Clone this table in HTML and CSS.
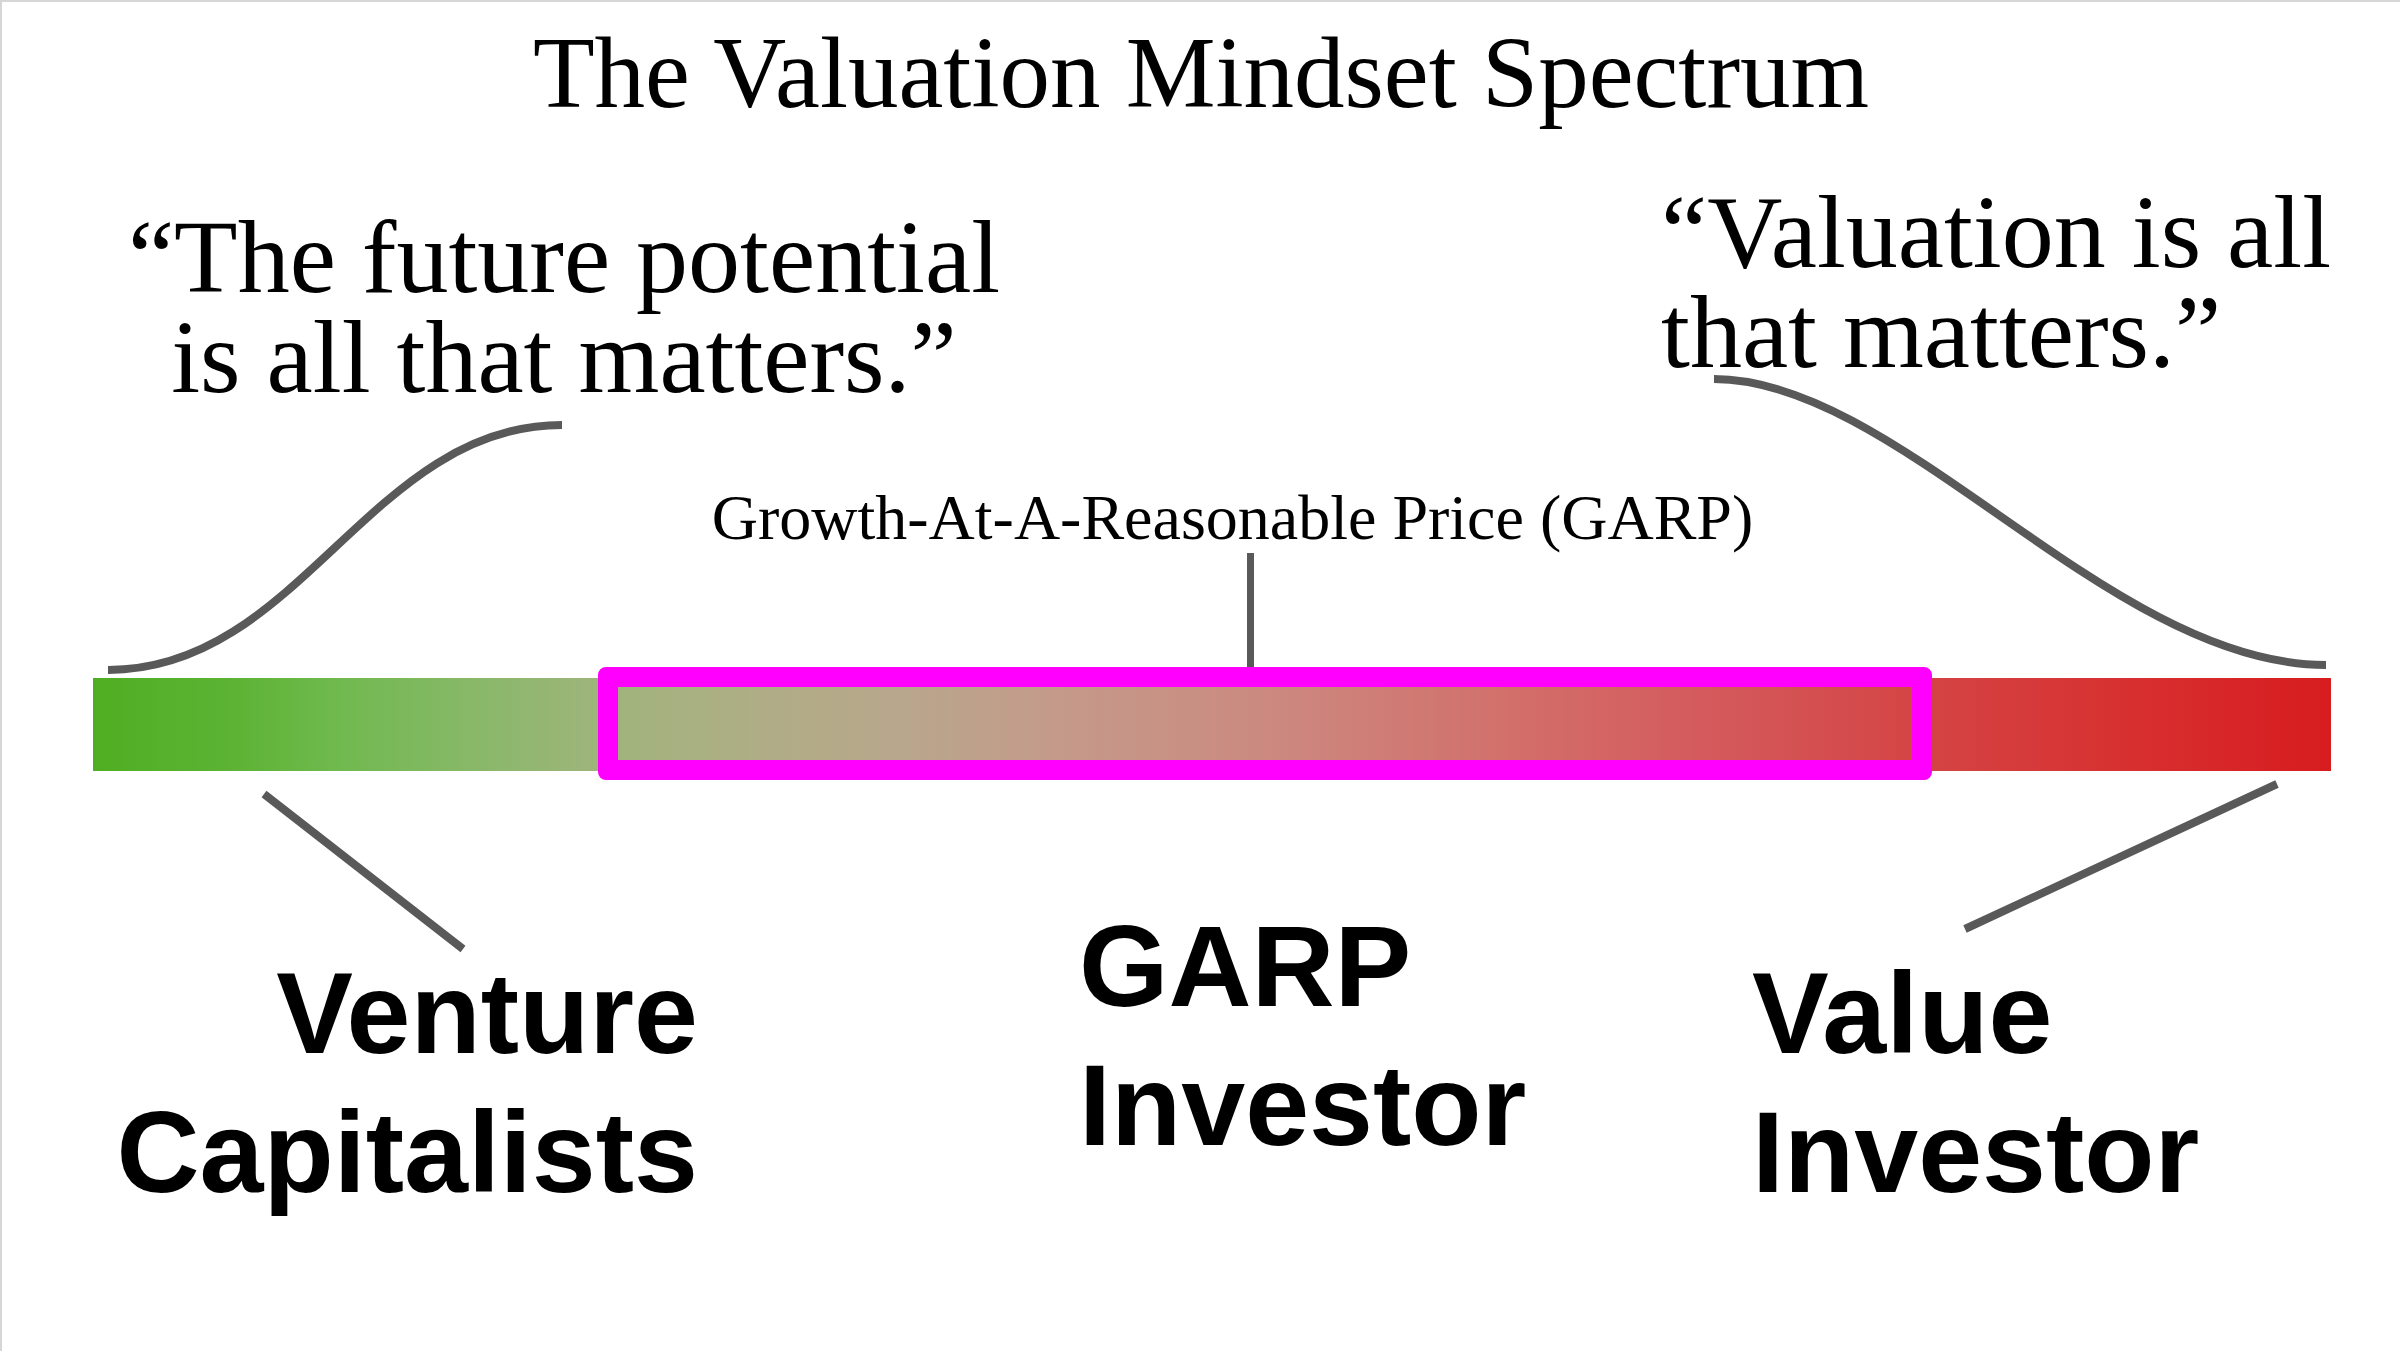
FILE: index.html
```html
<!DOCTYPE html>
<html lang="en">
<head>
<meta charset="utf-8">
<title>The Valuation Mindset Spectrum</title>
<link rel="stylesheet" href="styles.css">
</head>
<body>
<div class="slide">
  <h1 class="title">The Valuation Mindset Spectrum</h1>

  <div class="quotes">
    <p class="quote quote-left">“The future potential<br>is all that matters.”</p>
    <p class="quote quote-right">“Valuation is all<br>that matters.”</p>
  </div>

  <div class="garp-label">Growth-At-A-Reasonable Price (GARP)</div>
  <div class="stick"></div>

  <div class="spectrum">
    <div class="garp-box"></div>
  </div>

  <div class="labels">
    <div class="label label-vc">Venture<br>Capitalists</div>
    <div class="label label-garp">GARP<br>Investor</div>
    <div class="label label-value">Value<br>Investor</div>
  </div>

  <svg class="connectors" viewBox="0 0 2400 1351" width="2400" height="1351" aria-hidden="true">
    <path d="M108 670 C 300 670, 370 425, 562 425" />
    <path d="M1714 379 C 1900 379, 2110 665, 2326 665" />
    <path d="M264 794 L463 949" />
    <path d="M2277 784 L1965 929" />
  </svg>
</div>
</body>
</html>
```

FILE: styles.css
```css
* {
  box-sizing: border-box;
}

html, body {
  margin: 0;
  padding: 0;
  background: #ffffff;
}

.slide {
  position: relative;
  width: 2400px;
  height: 1351px;
  overflow: hidden;
  border-top: 2px solid #d6d6d6;
  border-left: 2px solid #d6d6d6;
  background: #ffffff;
  color: #000000;
}

.title {
  margin: 0;
  padding-top: 21px;
  font-family: "Liberation Serif", "Times New Roman", serif;
  font-weight: normal;
  font-size: 101px;
  line-height: 100px;
  text-align: center;
  white-space: nowrap;
}

.quotes {
  display: flex;
  align-items: flex-start;
  margin-top: 59px;
}

.quote {
  margin: 0;
  font-family: "Liberation Serif", "Times New Roman", serif;
  font-size: 104px;
  line-height: 100px;
  white-space: nowrap;
}

.quote-left {
  width: 1000px;
  margin-left: 62px;
  margin-top: 25px;
  text-align: center;
}

.quote-right {
  margin-left: 597px;
  text-align: left;
}

.garp-label {
  margin-top: 76px;
  padding-left: 63px;
  font-family: "Liberation Serif", "Times New Roman", serif;
  font-size: 64px;
  line-height: 70px;
  text-align: center;
  white-space: nowrap;
}

.stick {
  width: 7px;
  height: 114px;
  margin-left: 1245px;
  background: #595959;
}

.spectrum {
  position: relative;
  width: 2238px;
  height: 93px;
  margin-top: 11px;
  margin-left: 91px;
  background: linear-gradient(90deg,
    #4fae22 0%,
    #5cb333 6%,
    #70b94f 11%,
    #8cb86c 18%,
    #a0b47c 23%,
    #b0ad86 30%,
    #b8a78c 36%,
    #c49a8a 43%,
    #cb8a80 52%,
    #d2706c 63%,
    #d45a5c 72%,
    #d44646 81%,
    #d73232 90%,
    #d71c1f 100%);
}

.garp-box {
  position: absolute;
  left: 505px;
  top: -11px;
  width: 1334px;
  height: 113px;
  border: 20px solid #ff00ff;
  border-radius: 8px;
}

.labels {
  display: flex;
  align-items: flex-start;
  font-family: "Liberation Sans", Arial, sans-serif;
  font-weight: bold;
  font-size: 115px;
  line-height: 139px;
  white-space: nowrap;
}

.label-vc {
  width: 696px;
  margin-top: 173px;
  text-align: right;
}

.label-garp {
  width: 595px;
  margin-left: 381px;
  margin-top: 126px;
}

.label-value {
  margin-left: 78px;
  margin-top: 173px;
}

.connectors {
  position: absolute;
  top: -2px;
  left: -2px;
  pointer-events: none;
  fill: none;
  stroke: #595959;
  stroke-width: 8;
}
```
